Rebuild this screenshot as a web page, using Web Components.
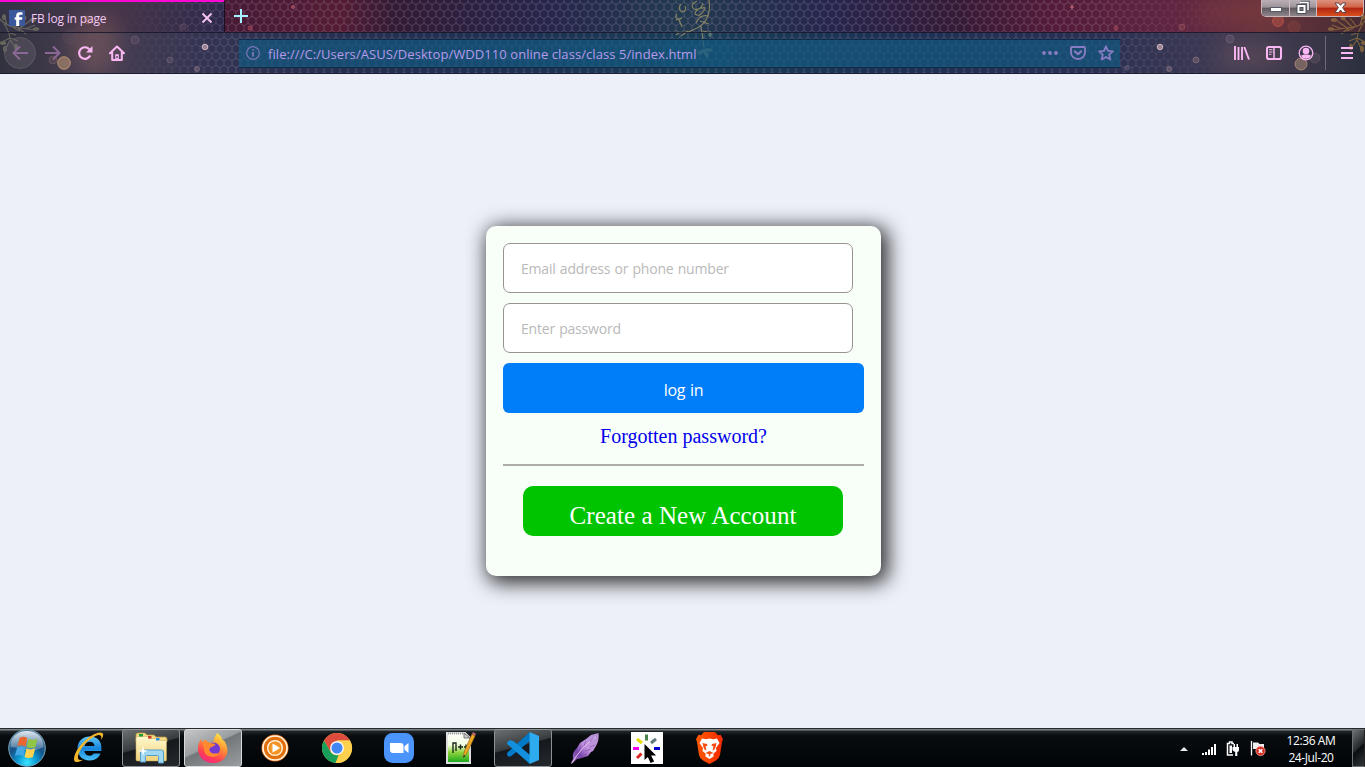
<!DOCTYPE html>
<html lang="en">
<head>
<meta charset="utf-8">
<title>FB log in page</title>
<style>
html,body{margin:0;height:100%;overflow:hidden}
body{display:flex;flex-direction:column;width:1365px;height:767px;background:#edf0f9;font-family:"Open Sans","Noto Sans",sans-serif}
</style>
</head>
<body>
<browser-chrome>
  <browser-tab slot="tab">FB log in page</browser-tab>
  <address-bar>file:///C:/Users/ASUS/Desktop/WDD110 online class/class 5/index.html</address-bar>
</browser-chrome>
<login-page></login-page>
<task-bar></task-bar>
<script>
const icons = {
  fb:[16,16,`<path fill="#3a589b" d="M0 0h16v16H0z"/><path fill="#fff" d="M7.200 16V9.800H5.700V7.300H7.200V5.500C7.200 3.400 8.500 2.200 10.500 2.200H13.500V4.700H11.800C10.600 4.700 10.200 5.100 10.200 6V7.300H13.400L13 9.800H10.200V16z"/>`],
  close:[12,12,`<path d="M1.500 1.500l9 9m0-9l-9 9" stroke="#f6c4f0" stroke-width="1.900" fill="none"/>`],
  plus:[14,14,`<path d="M7 0v14M0 7h14" stroke="#a6f3ff" stroke-width="2" fill="none"/>`],
  back:[16,16,`<path d="M16 8H1.500M8 1.500L1.500 8 8 14.500" stroke="#8a6794" stroke-width="2" fill="none"/>`],
  forward:[16,16,`<path d="M0 8h14.500M8 1.500L14.500 8 8 14.500" stroke="#8a6794" stroke-width="2" fill="none"/>`],
  reload:[16,16,`<path d="M12.300 4.200A5.800 5.800 0 1 0 13.200 10.500" stroke="#f9b8f4" stroke-width="2.200" fill="none"/><path d="M15.500 1v6.500H9z" fill="#f9b8f4"/>`],
  home:[16,16,`<path d="M1 8.300L8 1.500l7 6.800M3.200 7.500V15h9.600V7.500" stroke="#f9b8f4" stroke-width="2" fill="none" stroke-linejoin="round" stroke-linecap="round"/><path d="M6.200 9.200h3.600V14H6.200z" fill="#f9b8f4"/><path d="M8 11v2" stroke="#403652" stroke-width="1.200"/>`],
  info:[14,14,`<circle cx="7" cy="7" r="6.300" fill="none" stroke="#7a76b8" stroke-width="1.200"/><path d="M7 6v4.500M7 3.300v1.500" stroke="#8a80c4" stroke-width="1.500"/>`],
  dots:[16,4,`<g fill="#8a7cc4"><circle cx="2" cy="2" r="1.900"/><circle cx="8" cy="2" r="1.900"/><circle cx="14" cy="2" r="1.900"/></g>`],
  pocket:[16,14,`<path d="M2 1h12q1 0 1 1v4.500a7 6.500 0 0 1-14 0V2q0-1 1-1z" fill="none" stroke="#8a7cc4" stroke-width="1.900"/><path d="M4.800 5.200L8 8.300l3.200-3.100" fill="none" stroke="#8a7cc4" stroke-width="2" stroke-linecap="round" stroke-linejoin="round"/>`],
  star:[16,16,`<path d="M8 1.300l2 4.500 4.900.5-3.700 3.300 1.100 4.900L8 12l-4.300 2.500 1.100-4.900L1.100 6.300 6 5.800z" fill="none" stroke="#8a7cc4" stroke-width="1.800" stroke-linejoin="round"/>`],
  library:[16,14,`<path d="M1 0v14M4.500 1v13M8 1v13M10.300 1L15 13.500" stroke="#f9b8f4" stroke-width="1.900" fill="none"/>`],
  sidebar:[16,14,`<rect x="1" y="1" width="14" height="12" rx="1.800" fill="none" stroke="#f9b8f4" stroke-width="2"/><path d="M8 1v12" stroke="#f9b8f4" stroke-width="1.500"/><path d="M3 3.700h3.500M3 6h3.500M3 8.300h2.500" stroke="#f9b8f4"/>`],
  account:[16,16,`<circle cx="8" cy="8" r="6.800" fill="none" stroke="#f9b8f4" stroke-width="1.300"/><circle cx="8" cy="6" r="3.300" fill="#f9b8f4"/><path d="M3 10.500Q5 9.800 6 9.500h4q1 .3 3 1-1.500 3.200-5 3.200T3 10.500z" fill="#f9b8f4"/>`],
  menu:[12,12,`<path d="M0 1h12M0 6h12M0 11h12" stroke="#f9b8f4" stroke-width="2"/>`],
  min:[12,5,`<rect x=".5" y=".5" width="11" height="4" fill="#fff" stroke="#555a66"/>`],
  restore:[14,14,`<path d="M4.500 1.500h7.500v7.500" fill="none" stroke="#4c505b" stroke-width="3.400"/><path d="M4 1.500h8v7.500" fill="none" stroke="#fff" stroke-width="1.500"/><rect x="1" y="3.500" width="9" height="9" fill="#fff" stroke="#4c505b"/><rect x="4" y="6.500" width="3" height="3" fill="#777" stroke="#4c505b"/>`],
  wclose:[13,12,`<path d="M1 1h3.600l1.900 2.300L8.400 1H12L8.600 5.600 12 10.500H8.400L6.500 8 4.600 10.500H1l3.400-4.900z" fill="#fff" stroke="#5b4650"/>`],
  start:[40,38,`<defs><radialGradient id="o" cx=".5" cy=".9" r=".85"><stop offset="0" stop-color="#3be6ff"/><stop offset=".3" stop-color="#0d9bd5"/><stop offset=".6" stop-color="#155287"/><stop offset="1" stop-color="#52708d"/></radialGradient><linearGradient id="g" x2="0" y2="1"><stop stop-color="#eff6fb" stop-opacity=".9"/><stop offset="1" stop-color="#9cb9d0" stop-opacity=".35"/></linearGradient></defs><circle cx="20" cy="19" r="18.300" fill="url(#o)" stroke="#73a7bd"/><path d="M3.500 18C3 8 11 2 20 2s17 6 16.500 16Q27 23 20 21T3.500 18z" fill="url(#g)"/><path d="M12.500 9Q16 6.500 20.300 9L18.500 17.500Q14.500 15.200 10.500 17z" fill="#e9662f"/><path d="M21.500 9.800Q26 12 30.500 9.500L28.500 18Q24 20 19.700 18z" fill="#91c545"/><path d="M10.200 18.300Q14.500 16.700 18.200 19L16.400 27.400Q12.200 25 8 27z" fill="#45a8e4"/><path d="M19.400 19.400Q24 21.500 28.200 19.300L26 28Q21.500 30 17.500 28z" fill="#ffd34d"/>`],
  ie:[34,34,`<defs><linearGradient id="i" x2="0" y2="1"><stop stop-color="#62c7f6"/><stop offset=".5" stop-color="#1684dc"/><stop offset="1" stop-color="#49c0f5"/></linearGradient></defs><path d="M18.500 5.500C10 5 5.500 11 5.500 17.500c0 7 5 12 12 12 6 0 9.500-3 11-7h-6.800c-1.100 1.700-2.300 2.200-4.200 2.200-3.200 0-5-2-5-4.700h16.800C30.500 11.500 26.500 6 18.500 5.500zM12.700 15c.6-2.800 2.500-4.200 5.200-4.200s4.300 1.500 4.600 4.200z" fill="url(#i)"/><path d="M29 9Q34 1.500 28 1.500C18 2.500 3 17 2 28c-.2 4.500 5 3.500 9.500.5Q5 30.500 6 25C8.500 16 18 6.500 26 4q4.500-.5 3 5z" fill="#f2b62c"/>`],
  explorer:[34,32,`<defs><linearGradient id="e" x2="0" y2="1"><stop stop-color="#fff8ce"/><stop offset="1" stop-color="#efd17a"/></linearGradient></defs><path d="M2 3Q2 1 4 1h7l2 2h7l2 2h9q2 0 2 2v3H2z" fill="#f2d883" stroke="#bb993f" stroke-width=".7"/><path d="M3.500 4.500h10l2 2h9l2 2h6V28q0 1-1 1H3.500Q2 29 2 27.500V6q0-1.500 1.500-1.500z" fill="url(#e)" stroke="#c9aa55" stroke-width=".5"/><path d="M5 2h4v2.500H5z" fill="#1d9b35"/><path d="M14 4h3.500v2.500H14z" fill="#d1392e"/><path d="M22 6h3.500v2.500H22z" fill="#2a8fdc"/><path d="M6.500 30V20q0-2 2-2h19q2 0 2 2v11h-5v-6.500q0-1-1-1h-11q-1 0-1 1V30z" fill="#a2d9f2" stroke="#579fca"/><path d="M9 14l1 4 4 1-4 1-1 4-1-4-4-1 4-1z" fill="#fff"/>`],
  firefox:[32,32,`<defs><linearGradient id="f" x1=".8" y1="0" x2=".3" y2="1"><stop stop-color="#fff04a"/><stop offset=".4" stop-color="#ff9632"/><stop offset=".75" stop-color="#ff4250"/><stop offset="1" stop-color="#f62582"/></linearGradient></defs><path d="M20 1c3 2 5 4.500 5.500 7q2 .5 2.500 2 4 8 1.500 13A14.500 14.500 0 0 1 16 31C7 31 1 24.500 1 16.500 1 12 3 8.500 4.500 6.500q0 2 1 3.500Q7 8 8.500 7.500L12 11l4-.5Q17 5.500 20 1z" fill="url(#f)"/><circle cx="16.500" cy="17" r="6.500" fill="#733bd0"/><path d="M5.500 11Q10 9 13.500 11l5 1q-1 2.500-4 3-2.500 1-2 3.500 1.500 3.500 5 3 3-.5 5 .5-4 4-9 2.500Q6.500 23 7 16z" fill="#ff892f"/>`],
  media:[28,28,`<defs><radialGradient id="m"><stop stop-color="#ffb44b"/><stop offset="1" stop-color="#ee8413"/></radialGradient></defs><circle cx="14" cy="14" r="13.500" fill="#ee701b"/><circle cx="14" cy="14" r="12" fill="none" stroke="#fff3d7" stroke-width="1.700"/><circle cx="14" cy="14" r="9.600" fill="none" stroke="#e0700e" stroke-width="2.400"/><circle cx="14" cy="14" r="7.300" fill="url(#m)" stroke="#fff0cf" stroke-width="1.500"/><path d="M11.500 9.500l7.500 4.500-7.500 4.500z" fill="#fff"/>`],
  chrome:[30,30,`<circle cx="15" cy="15" r="15" fill="#fbcb43"/><path d="M2 7.500A15 15 0 0 1 28 7.500H15L8.500 18.700z" fill="#de4c3e"/><path d="M2 7.500L8.500 18.700Q11 23 16.500 22L13.500 30A15 15 0 0 1 2 7.500z" fill="#199f5c"/><path d="M15 7.500h13a15 15 0 0 1-14.500 22.500l8-11.300z" fill="#fdd04d"/><circle cx="15" cy="15" r="7" fill="#f5f5f5"/><circle cx="15" cy="15" r="5.500" fill="#4387f4"/>`],
  zoom:[30,30,`<rect width="30" height="30" rx="8.500" fill="#4a94fb"/><path d="M6 10h10.500q3 0 3 3v7H9q-3 0-3-3z" fill="#fff"/><path d="M20.500 13.300l4-3.300v10l-4-3.300z" fill="#fff"/>`],
  notepad:[32,34,`<defs><linearGradient id="n" x2="0" y2="1"><stop stop-color="#fff"/><stop offset=".4" stop-color="#f2ffe0"/><stop offset=".65" stop-color="#8cd33b"/><stop offset="1" stop-color="#11a51c"/></linearGradient></defs><path d="M2 2h18l5 5v25H2z" fill="url(#n)" stroke="#ddd" stroke-width="2"/><path d="M3 2.500h16" stroke="#9f9f9f" stroke-width="2" stroke-dasharray="1 1"/><path d="M19 2l6 5h-6z" fill="#ccc" stroke="#777"/><path d="M8 22V12h3v8M13 16h5m-2.500-2.500v5M19 16h4m-2-2.500v5" stroke="#1d291b" stroke-width="1.400" fill="none"/><path d="M18 26l1.500-6L27 3l3 2-8 17z" fill="#eeaa23" stroke="#96631c" stroke-width=".7"/><path d="M27 3l1-2 3 2-1 2z" fill="#c56874"/><path d="M18 27l1-3 1.500 1z" fill="#222"/>`],
  vscode:[32,32,`<path d="M23 0v9L5 23.500 2 25l-2-2v-2L23 0z" fill="#0079c8"/><path d="M0 10.500L3 8l4 1.500L23 23v9L0 12z" fill="#128fdd"/><path d="M22.500 0L32 4v24l-9.500 4z" fill="#2eabee"/>`],
  feather:[30,32,`<defs><linearGradient id="q" x1="1" y1="0" x2="0" y2="1"><stop stop-color="#b491d1"/><stop offset=".45" stop-color="#c092df"/><stop offset=".7" stop-color="#7943ac"/><stop offset="1" stop-color="#ae83c5"/></linearGradient></defs><path d="M28.500 1Q29.500 8 26 14l-3 5-2 1-3 4-8 2.500-3 .5L1.500 32q-.8-.6 0-2L3 27Q2 20 7 16l3-5 6-4 5-4z" fill="url(#q)"/><path d="M2 31Q11 15 26 5" stroke="#e1c4ef" fill="none"/><path d="M5 24l3-7M9 19l2-6M14 14l2-5M20 10l3-4M11 24l6-2M15 19l6-2M20 15l5-2" stroke="#8350a8" stroke-width=".7"/>`],
  cursor:[32,32,`<path fill="#fff" d="M0 0h32v32H0z"/><g stroke-width="3" fill="none"><path d="M15.500 2.500v6" stroke="#47844c"/><path d="M6 7l5 4" stroke="#e5dc00"/><path d="M20 11l5-4" stroke="#5d797a"/><path d="M2 16.500h6" stroke="#ef00ee"/><path d="M23 16.500h6" stroke="#0000cf"/><path d="M6 26l4.500-4.500" stroke="#df2523"/></g><path d="M13.500 12v16l3.300-3 2.800 6 3.500-1.500-3-6h5z"/>`],
  brave:[27,32,`<defs><linearGradient id="v"><stop stop-color="#ff5900"/><stop offset="1" stop-color="#f32a00"/></linearGradient></defs><path d="M8 0h11l3 3.200 2.500-.4L27 7l-1 3-2 13q-.5 3-4 5.500L13.500 32 7 28.500Q3.500 26 3 23L1 10 0 7l2.500-4.200 2.500.4z" fill="url(#v)"/><path d="M6 6.500l4 .8 3.500-.8 3.500.8 4-.8L23.500 11l-3.500 5 .5 3-3 2.500v3L13.500 27 9.500 24.500v-3L6.500 19l.5-3L3.500 11z" fill="#fff"/><path d="M6.500 11l4.500 1 .5 1.500-2 1 1 4-2-1-1-2zM20.500 11l-4.500 1-.5 1.500 2 1-1 4 2-1 1-2zM9.500 21l4-2 4 2-3.300 1.300v2h-1.400v-2z" fill="#f74b13"/>`],
  up:[8,4,`<path d="M4 0l4 4H0z" fill="#e7edf2"/>`],
  signal:[14,11,`<path fill="#fff" d="M0 9h2v2H0zM3 8h2v3H3zM6 5.500h2V11H6zM9 3h2v8H9zM12 0h2v11h-2z"/>`],
  power:[14,16,`<path d="M8 2.500H6V1H3.500v1.500H1.500V14H7" fill="none" stroke="#fff" stroke-width="1.500"/><path d="M3.500 4.500H6V12H3.500zM7.500 3H9v3h1.500V3H12v3h1v3q0 2-1.700 2v4H9.200v-4Q7 10 6.500 9V6h1z" fill="#fff"/>`],
  flag:[15,16,`<path d="M1.500 1v14.500" stroke="#fff" stroke-width="1.300"/><path d="M3 2.500h5L9.500 4H14v6H8L7 9H3z" fill="#eee"/><circle cx="10.500" cy="11" r="4.600" fill="#d92c20" stroke="#f7a09a" stroke-width=".8"/><path d="M8.700 9.200l3.600 3.600m0-3.600l-3.600 3.600" stroke="#fff" stroke-width="1.600"/>`]
};
const define = (name, html) => customElements.define(name, class extends HTMLElement {
  constructor(){ super(); this.attachShadow({mode:'open'}).innerHTML = html; }
});
customElements.define('x-icon', class extends HTMLElement {
  connectedCallback(){
    if (this.shadowRoot) return;
    const [w,h,body] = icons[this.getAttribute('name')];
    this.attachShadow({mode:'open'}).innerHTML = `<style>:host{display:block;flex:none;width:${w}px;height:${h}px}svg{display:block;overflow:visible}</style><svg width="${w}" height="${h}" viewBox="0 0 ${w} ${h}">${body}</svg>`;
  }
});
/* theme artwork behind the tab strip and the tool bar */
const sprig = `<g fill="none" stroke-width="1.200"><path d="M0 19Q6 26 14 27T34 30M4 24Q10 32 10 40M7 25l-2-7M11 26l6-8M15 27l9-9M20 28l11-8M25 29l10-4M18 28l8 6M12 27l8 4M10 33l6 2M10 38l-8 4M10 40l-4 8M10 40l6 8M10 38l8 3"/></g><g><ellipse cx="33" cy="20" rx="3" ry="1.400"/><ellipse cx="24" cy="18" rx="2" ry="2"/><ellipse cx="36" cy="29" rx="3" ry="1.300"/><ellipse cx="3" cy="43" rx="3" ry="1.500"/><ellipse cx="5" cy="49" rx="1.500" ry="3"/><ellipse cx="16" cy="47" rx="1.500" ry="3"/><ellipse cx="4" cy="17" rx="1.500" ry="2.500"/></g>`;
const bokeh = [[88,20,4,'#b07664',.45],[64,63,6.300,'#d2a57c',.75],[135,40,4,'#8d7791',.3],[205,47,2.800,'#edc9cf',.8],[170,60,3,'#967b87',.35],[197,69,2.500,'#a98d98',.45],[183,27,3,'#83677a',.3],[293,7,1.500,'#d46e7d',.6],[250,28,2,'#bc5261',.6],[53,60,4,'#9a7473',.35],[70,37,7,'#756072',.2],[1072,7,1.300,'#d46e7d',.7],[1116,28,2,'#bc5261',.5],[1182,27,3,'#b76764',.4],[1160,47,2.800,'#edc9cf',.8],[1230,39,4,'#8d7791',.35],[1196,60,3,'#a28086',.5],[1169,69,2.500,'#a98d98',.5],[1278,21,5.500,'#c4574b',.7],[1294,27,6,'#a15044',.35],[1301,64,6,'#c09a7b',.7],[1315,58,5,'#8e7479',.3],[1127,68,2,'#957b93',.4]].map(([x,y,r,c,o])=>`<circle cx="${x}" cy="${y}" r="${r}" fill="${c}" fill-opacity="${o*.65}" stroke="${c}" stroke-opacity="${o}"/>`).join('');
define('theme-art', `<style>:host{display:block;width:1365px;height:74px}svg{display:block}</style>
<svg width="1365" height="74"><defs>
<linearGradient id="a"><stop stop-color="#343248"/><stop offset=".1" stop-color="#3b3048"/><stop offset=".163" stop-color="#471a34"/><stop offset=".25" stop-color="#551d35"/><stop offset=".29" stop-color="#321b34"/><stop offset=".4" stop-color="#27264b"/><stop offset=".5" stop-color="#223a50"/><stop offset=".61" stop-color="#27264d"/><stop offset=".7" stop-color="#351b36"/><stop offset=".77" stop-color="#541c38"/><stop offset=".86" stop-color="#602541"/><stop offset=".93" stop-color="#68343c"/><stop offset="1" stop-color="#452b34"/></linearGradient>
<linearGradient id="b"><stop stop-color="#32323f"/><stop offset=".07" stop-color="#493e51"/><stop offset=".15" stop-color="#333452"/><stop offset=".24" stop-color="#26304f"/><stop offset=".38" stop-color="#1d3153"/><stop offset=".51" stop-color="#193e56"/><stop offset=".65" stop-color="#1c3154"/><stop offset=".8" stop-color="#293052"/><stop offset=".9" stop-color="#403a53"/><stop offset=".96" stop-color="#3b3749"/><stop offset="1" stop-color="#2b303e"/></linearGradient>
<pattern id="h" width="8" height="14" patternUnits="userSpaceOnUse"><path d="M4 0v2.300L0 4.700v4.600L4 11.700V14M4 2.300L8 4.700v4.600L4 11.700" fill="none" stroke="#b5a3c4" stroke-opacity=".3" stroke-width=".9"/></pattern>
<linearGradient id="k"><stop offset=".08" stop-color="#000"/><stop offset=".18" stop-color="#fff"/><stop offset=".8" stop-color="#fff"/><stop offset=".91" stop-color="#000"/></linearGradient><mask id="z"><path fill="url(#k)" d="M0 0h1365v74H0z"/></mask>
<linearGradient id="t"><stop stop-color="#343346"/><stop offset=".5" stop-color="#473649"/><stop offset="1" stop-color="#2e294b"/></linearGradient>
<filter id="blur" x="-50%" y="-50%" width="200%" height="200%"><feGaussianBlur stdDeviation="10"/></filter></defs>
<path fill="url(#a)" d="M0 0h1365v33H0z"/><path fill="url(#t)" d="M0 0h224v33H0z"/><path fill="url(#b)" d="M0 33h1365v41H0z"/>
<g filter="url(#blur)" opacity=".22"><ellipse cx="95" cy="45" rx="25" ry="30" fill="#c78571"/><ellipse cx="1250" cy="56" rx="35" ry="14" fill="#a6766b"/><ellipse cx="1240" cy="12" rx="50" ry="10" fill="#b75b46"/></g>
<path fill="url(#h)" mask="url(#z)" d="M0 0h1365v74H0z"/>${bokeh}
<g fill="#777865" stroke="#777865" opacity=".75">${sprig}</g><g transform="translate(1367 0) scale(-1 1)" fill="#95703f" stroke="#95703f" opacity=".75">${sprig}</g>
<g fill="none" stroke="#a69b66" stroke-width="1.100" opacity=".75"><path d="M709 0q3 22-14 29-9 5-19 3M681 4q-4 5 1 8 5-1 3-6M677 14q-3 4 2 6l3 7M697 1q-8 4-3 8 7 2 9-6M706 8q-10-1-11 6 5 4 10-5M701 26l3 21M676 20l6-2M688 31l-7 5M708 16q-8-2-12 7M709 24l-9-3M703 31l8 2M680 32l-4 3"/><g fill="#718e7c" stroke="none"><ellipse cx="701" cy="52" rx="4" ry="1.800" transform="rotate(-25 701 52)"/><ellipse cx="708" cy="50" rx="4" ry="1.800"/><ellipse cx="706" cy="54" rx="1.800" ry="4" transform="rotate(-25 706 54)"/><ellipse cx="710" cy="34" rx="1.500" ry="3"/></g></g>
<path d="M0 32.500h1365M0 73.500h1365" stroke="#17172c" stroke-opacity=".85"/><path d="M224.500 2v30" stroke="#1c0e22"/>
</svg>`);
define('browser-tab', `<style>:host{box-sizing:border-box;display:flex;align-items:center;width:224px;height:33px;border-top:2px solid #f808d2;padding:1px 11px 0 9px;color:#f4c9f3;font-size:12px}span{flex:1;margin-left:6px;letter-spacing:-.17px;white-space:nowrap}</style><x-icon name="fb"></x-icon><span><slot></slot></span><x-icon name="close"></x-icon>`);
define('address-bar', `<style>:host{box-sizing:border-box;display:flex;align-items:center;width:881px;height:29px;padding:0 6px 0 7px;background:rgba(18,89,128,.7);border:solid #0e2c4a;border-width:1px 0;color:#b79aec;font-size:13px}span{flex:1;margin-left:8px;padding-top:2px;letter-spacing:.067px;white-space:nowrap}x-icon+x-icon{margin-left:12px}</style><x-icon name="info"></x-icon><span><slot></slot></span><x-icon name="dots"></x-icon><x-icon name="pocket"></x-icon><x-icon name="star"></x-icon>`);
define('window-buttons', `<style>:host{display:flex;width:103px;height:17px;border:1px solid #c8b6b9;border-top:0;border-radius:0 0 5px 5px;box-sizing:border-box;overflow:hidden}div{display:flex;align-items:center;justify-content:center;width:27px;background:linear-gradient(#bab0b5,#9d9499 45%,#5f585f 50%,#8d858a);border-right:1px solid #d0bdc3}div:nth-of-type(1) x-icon{margin-top:3px}div:nth-of-type(2){width:26px}div:last-child{flex:1;border:0;background:linear-gradient(#de927f,#cf6348 45%,#b12511 50%,#d9501e)}</style><div><x-icon name="min"></x-icon></div><div><x-icon name="restore"></x-icon></div><div><x-icon name="wclose"></x-icon></div>`);
define('browser-chrome', `<style>:host{display:block;position:relative;height:74px;flex:none}theme-art{position:absolute;inset:0}.strip,.bar{position:relative;display:flex;align-items:center}.strip{height:33px}.plus{margin-left:10px;margin-bottom:1px}window-buttons{margin-left:auto;margin-right:1px;align-self:flex-start}.bar{height:40px;box-sizing:border-box}.back{display:flex;align-items:center;justify-content:center;box-sizing:border-box;width:32px;height:32px;margin-left:4px;border:1px solid #5c5764;border-radius:50%;background:rgba(120,112,124,.3)}.forward{margin-left:9px}.reload,.home{margin-left:16px}slot{display:block}.address{margin-left:114px}.lib{margin-left:114px}.side,.acc{margin-left:16px}.sep{width:1px;height:34px;background:#706a77;margin-left:11px}.menu{margin-left:15px}</style>
<theme-art></theme-art><div class="strip"><slot name="tab"></slot><x-icon class="plus" name="plus"></x-icon><window-buttons></window-buttons></div>
<div class="bar"><div class="back"><x-icon name="back"></x-icon></div><x-icon class="forward" name="forward"></x-icon><x-icon class="reload" name="reload"></x-icon><x-icon class="home" name="home"></x-icon><div class="address"><slot></slot></div><x-icon class="lib" name="library"></x-icon><x-icon class="side" name="sidebar"></x-icon><x-icon class="acc" name="account"></x-icon><div class="sep"></div><x-icon class="menu" name="menu"></x-icon></div>`);
define('text-field', `<style>:host{box-sizing:border-box;display:flex;align-items:center;width:350px;height:50px;padding:0 17px;border:1px solid #989391;border-radius:7px;background:#fff;color:#b9b9b9;font-size:14px;margin-bottom:10px;letter-spacing:-.2px;word-spacing:.8px}</style><slot></slot>`);
define('login-card', `<style>:host{box-sizing:border-box;display:flex;flex-direction:column;width:395px;height:350px;padding:17px;border-radius:10px;background:#f8fff8;box-shadow:4px 4px 20px 3px #000000d0}.login{display:flex;align-items:center;justify-content:center;height:50px;padding-top:4px;box-sizing:border-box;border-radius:6px;background:#007df9;color:#fff;font-size:16px;letter-spacing:-.3px;word-spacing:1px}.forgot{align-self:center;margin-top:12px;height:22px;color:#00e;font:20px/22px "Liberation Serif",serif}hr{width:361px;height:2px;margin:17px 0 20px;border:0;background:#b0abab}.create{display:flex;align-items:center;justify-content:center;box-sizing:border-box;width:320px;height:50px;margin-left:20px;padding-top:9px;border-radius:10px;background:#00c400;color:#fff;font:25px/28px "Liberation Serif",serif;letter-spacing:.07px}</style>
<text-field>Email address or phone number</text-field><text-field>Enter password</text-field><div class="login">log in</div><div class="forgot">Forgotten password?</div><hr><div class="create">Create a New Account</div>`);
define('login-page', `<style>:host{display:block;flex:1;background:#edf0f9;padding:152px 0 0 486px}</style><login-card></login-card>`);
define('task-button', `<style>:host{box-sizing:border-box;display:flex;align-items:center;justify-content:center;width:58px;height:38px;margin-right:4px;border:1px solid transparent;border-radius:3px}:host([open]){border-color:#8e9294;background:linear-gradient(165deg,#6d7072,#393c3e 43%,#15191e 46%,#25292e)}:host([active]){border-color:#d9dadb;background:linear-gradient(155deg,#c5c7c9,#9b9ea0 43%,#73777a 46%,#9a9d9f)}</style><slot></slot>`);
define('system-tray', `<style>:host{display:flex;align-items:center;margin-left:auto;height:38px;color:#fff}.up{margin-top:1px}.sig{margin-left:14px;margin-top:2px}.pow{margin-left:10px;margin-top:2px}.flag{margin-left:10px}.clock{width:64px;margin-left:14px;text-align:center;font-size:12px;line-height:17px;letter-spacing:-.4px;padding-top:2px;white-space:nowrap}.show{box-sizing:border-box;width:13px;height:38px;margin-left:9px;border:1px solid #6c7173;border-right-color:#222;background:linear-gradient(135deg,#6e7273,#22272a 50%,#090d10 52%,#30363a)}</style><x-icon class="up" name="up"></x-icon><x-icon class="sig" name="signal"></x-icon><x-icon class="pow" name="power"></x-icon><x-icon class="flag" name="flag"></x-icon><div class="clock"><div>12:36 AM</div><div>24-Jul-20</div></div><div class="show"></div>`);
define('task-bar', `<style>:host{box-sizing:border-box;display:flex;height:39px;flex:none;border-top:1px solid #252a2e;background:linear-gradient(#7c8285 0 1px,#20272b 2px,#080c0f 7px,#010406)}x-icon.start{margin:0 13px 0 7px}</style><x-icon class="start" name="start"></x-icon>
${['ie','explorer','firefox','media','chrome','zoom','notepad','vscode','feather','cursor','brave'].map(n=>`<task-button ${n==='firefox'?'active':n==='explorer'||n==='vscode'?'open':''}><x-icon name="${n}"></x-icon></task-button>`).join('')}<system-tray></system-tray>`);
</script>
</body>
</html>
